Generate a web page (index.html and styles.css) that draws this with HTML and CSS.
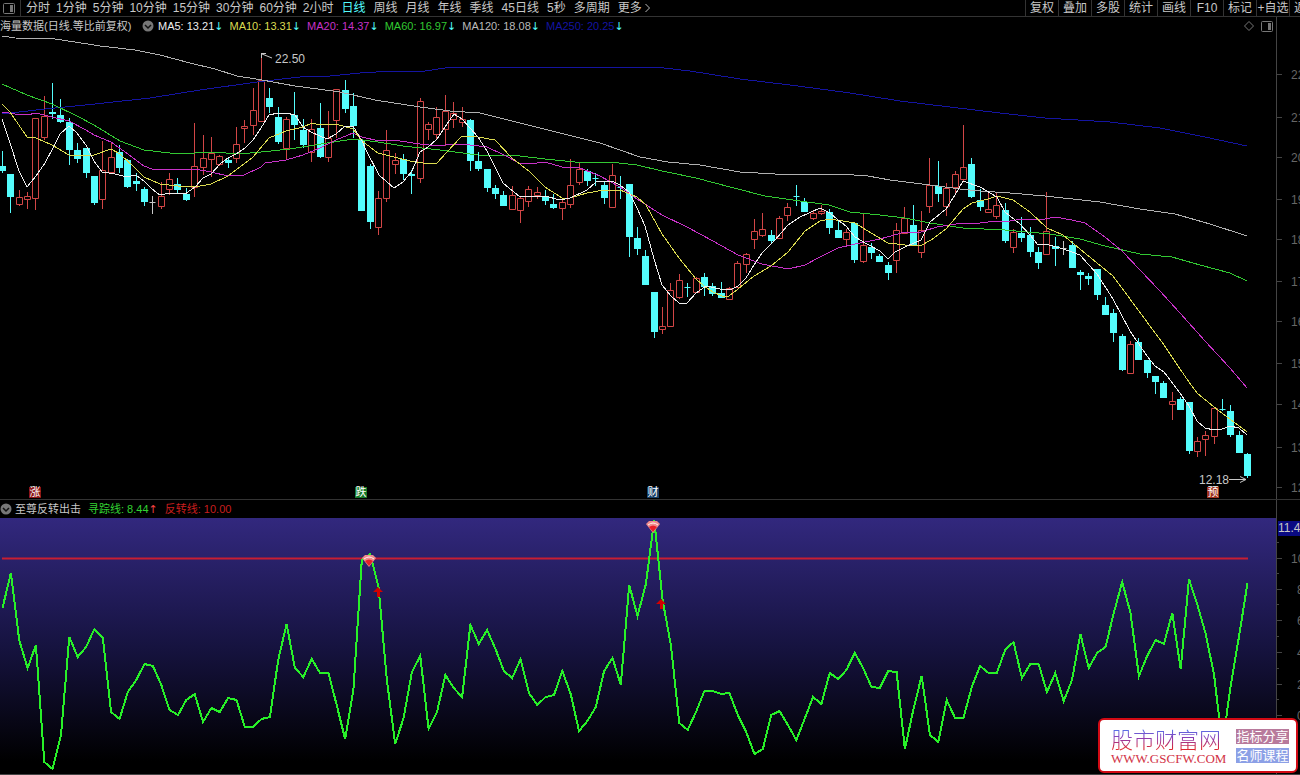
FILE: index.html
```html
<!DOCTYPE html>
<html lang="zh-CN">
<head>
  <meta charset="UTF-8" />
  <meta name="viewport" content="width=device-width, initial-scale=1.0" />
  <title>海量数据 日线</title>
  <link rel="stylesheet" href="styles.css">
</head>
<body>
  <header class="toolbar">
    <button class="panel-btn" aria-label="侧栏">
      <svg width="12" height="11" viewBox="0 0 12 11"><rect x="0.5" y="0.5" width="11" height="10" rx="1" fill="none" stroke="#777"/><rect x="7" y="2" width="3" height="7" fill="#777"/></svg>
    </button>
    <nav class="periods">
      <button>分时</button>
      <button>1分钟</button>
      <button>5分钟</button>
      <button>10分钟</button>
      <button>15分钟</button>
      <button>30分钟</button>
      <button>60分钟</button>
      <button>2小时</button>
    </nav>
    <nav class="periods long">
      <button class="active">日线</button>
      <button>周线</button>
      <button>月线</button>
      <button>年线</button>
      <button>季线</button>
      <button>45日线</button>
      <button>5秒</button>
      <button>多周期</button>
      <button>更多<svg width="7" height="10" viewBox="0 0 7 10"><path d="M1.5 1 L5.5 5 L1.5 9" fill="none" stroke="#bbb"/></svg></button>
    </nav>
    <div class="tools">
      <button>复权</button>
      <button>叠加</button>
      <button>多股</button>
      <button>统计</button>
      <button>画线</button>
      <button>F10</button>
      <button>标记</button>
      <button>+自选</button>
      <button>返回</button>
    </div>
  </header>

  <main>
    <section class="pane">
      <div class="legend">
        <span class="stock">海量数据(日线.等比前复权)</span>
        <svg class="fold" width="12" height="12" viewBox="0 0 12 12"><circle cx="6" cy="6" r="5.5" fill="#777"/><path d="M3 5 L6 8 L9 5" fill="none" stroke="#111" stroke-width="1.5"/></svg>
        <span class="ma ma5">MA5: 13.21</span>
        <span class="ma ma10">MA10: 13.31</span>
        <span class="ma ma20">MA20: 14.37</span>
        <span class="ma ma60">MA60: 16.97</span>
        <span class="ma ma120">MA120: 18.08</span>
        <span class="ma ma250">MA250: 20.25</span>
        <span class="legend-icons">
          <svg width="10" height="10" viewBox="0 0 10 10"><path d="M5 0.5 L9.5 5 L5 9.5 L0.5 5 Z" fill="none" stroke="#777"/></svg>
          <svg width="12" height="11" viewBox="0 0 12 11"><rect x="0.5" y="0.5" width="11" height="10" rx="1" fill="none" stroke="#777"/><rect x="7" y="2" width="3" height="7" fill="#777"/></svg>
        </span>
        <span class="axis-gap"></span>
      </div>
      <svg id="kline" class="chart" viewBox="0 35 1300 464"></svg>
    </section>

    <section class="pane sub">
      <div class="legend">
        <svg class="fold" width="12" height="12" viewBox="0 0 12 12"><circle cx="6" cy="6" r="5.5" fill="#777"/><path d="M3 5 L6 8 L9 5" fill="none" stroke="#111" stroke-width="1.5"/></svg>
        <span class="name">至尊反转出击</span>
        <span class="track">寻踪线: 8.44</span>
        <span class="turn">反转线: 10.00</span>
        <span class="axis-gap"></span>
      </div>
      <svg id="indicator" class="chart" viewBox="0 518 1300 257"></svg>
    </section>
  </main>

  <aside class="brand">
    <div class="brand-main">
      <strong>股市财富网</strong>
      <span>WWW.GSCFW.COM</span>
    </div>
    <div class="brand-tags">
      <span class="tag-pink">指标分享</span>
      <span class="tag-blue">名师课程</span>
    </div>
  </aside>

  <script src="chart.js"></script>
</body>
</html>
```
FILE: styles.css
```css
* { box-sizing: border-box; }
body {
  margin: 0;
  background-color: #000;
  color: #c8c8c8;
  font-family: "Liberation Sans", "Noto Sans CJK SC", sans-serif;
  font-size: 12px;
  overflow: hidden;
}
button {
  border: none;
  background: none;
  padding: 0;
  color: inherit;
  font: inherit;
  white-space: nowrap;
  cursor: pointer;
}
button:hover { color: #fff; }

/* top toolbar */
.toolbar {
  display: flex;
  height: 17px;
  line-height: 14px;
  border-bottom: 1px solid #333;
}
.panel-btn {
  width: 21px;
  border-right: 1px solid #333;
  display: flex;
  padding-left: 3px;
  align-items: center;
  flex-shrink: 0;
}
.periods {
  display: flex;
  gap: 6px;
  padding-left: 5px;
}
.periods.long { gap: 8px; padding-left: 8px; }
.periods .active { color: #54fcfc; }
.periods svg { margin-left: 2px; vertical-align: -1px; }
.tools {
  display: flex;
  width: 275px;
  margin-left: auto;
  overflow: hidden;
}
.tools button {
  width: 33px;
  flex-shrink: 0;
  border-left: 1px solid #333;
}

/* legend rows */
.legend {
  display: flex;
  align-items: center;
  height: 18px;
  font-size: 11px;
  line-height: 18px;
  white-space: nowrap;
}
.stock { width: 142px; }
.fold { flex-shrink: 0; }
.ma { margin-left: 4px; margin-right: 2px; }
.ma::after, .track::after {
  content: "↓";
  font-family: "DejaVu Sans", sans-serif;
  color: #54fcfc;
}
.ma5 { color: #eee; }
.ma10 { color: #dcdc50; }
.ma20 { color: #c832c8; }
.ma60 { color: #32c832; }
.ma120 { color: #bbb; }
.ma250 { color: #1414a0; }
.legend-icons {
  display: flex;
  align-items: center;
  gap: 7px;
  margin-left: auto;
  margin-right: 3px;
}
.axis-gap {
  width: 24px;
  height: 18px;
  border-left: 1px solid #444;
}
.chart { display: block; width: 100%; height: auto; }
.chart polyline { shape-rendering: crispEdges; }
.chart text { font-size: 12px; fill: #c8c8c8; }
.chart .axis { fill: #666; }
.chart .tag { font-size: 11px; fill: #fff; text-anchor: middle; }

/* indicator pane */
.sub { border-top: 1px solid #333; }
.name { margin-left: 3px; }
.track { color: #32d232; margin-left: 7px; }
.track::after { content: "↑"; color: #f04040; }
.turn { color: #c81e1e; margin-left: 7px; }
.sub .axis-gap { margin-left: auto; }

/* site badge over the corner */
.brand {
  position: fixed;
  right: 2px;
  bottom: 2px;
  display: flex;
  align-items: center;
  gap: 12px;
  width: 200px;
  height: 55px;
  padding-left: 11px;
  border: 2px solid #d20a14;
  border-radius: 6px;
  background-color: #fff;
}
.brand-main { display: flex; flex-direction: column; width: 113px; }
.brand-main strong {
  font-family: "Noto Sans CJK SC", sans-serif;
  font-size: 22px;
  font-weight: 300;
  line-height: 26px;
  background-image: linear-gradient(#5a6ee6 20%, #8c3cb4 50%, #dc2832 90%);
  background-clip: text;
  -webkit-background-clip: text;
  color: transparent;
}
.brand-main span {
  font-family: "Liberation Serif", serif;
  font-size: 13px;
  line-height: 16px;
  color: #d23246;
}
.brand-tags { display: flex; flex-direction: column; gap: 4px; }
.brand-tags span {
  width: 53px;
  font-size: 13px;
  line-height: 15px;
  color: #fff;
  text-align: center;
}
.tag-pink { background-color: #b87a9c; }
.tag-blue { background-color: #8ca0e6; }
```
FILE: chart.js
```js
// x of the first bar and the step between bars
const X0 = 2.5;
const STEP = 1245 / 149;
const barX = i => X0 + i * STEP;

// each bar: kind (u up, d down, c flat cross, w white cross), high, body top, body bottom, low
const bars = `d151,166,171,173 d174,174,197,213 u190,197,204,206 u192,196,199,209 u118,118,198,210
u96,116,137,140 d83,112,114,119 d99,115,122,123 d118,122,150,165 d143,150,159,163
d148,148,173,178 d176,176,203,205 u141,170,199,209 u142,157,172,174 d145,152,168,173
d159,160,187,188 d173,181,184,191 d187,189,202,206 w196,202,202,214 u182,196,206,209
u173,179,189,195 d178,184,190,193 d188,194,200,201 u123,166,187,197 u135,158,167,175
u137,153,159,177 u155,156,164,166 d158,160,163,168 u127,144,158,163 u120,126,128,143
u88,110,125,135 u54,80,121,122 d88,98,107,113 d107,117,142,144 u117,119,148,159
d92,115,125,140 d119,130,145,148 u119,129,152,162 d103,128,157,158 u111,138,157,162
u89,89,120,138 d80,90,109,113 d93,106,126,138 d140,140,211,211 d164,166,222,229
u191,198,227,235 u130,150,198,202 u153,160,164,174 d154,159,174,180 d170,174,176,194
u98,101,178,183 u122,124,129,140 u107,117,134,140 u95,111,129,146 u102,113,119,128
u107,119,122,127 d119,120,161,171 d152,161,169,171 d169,169,188,192 d185,188,194,199
d191,195,206,206 u186,195,209,209 u196,198,210,223 u186,189,201,207 u187,192,195,199
d190,196,201,205 d194,204,208,209 u200,202,208,220 u159,185,204,208 u162,169,182,185
d169,171,181,186 c173,178,178,186 d182,185,198,204 u164,175,207,208 c176,187,187,199
d184,184,237,257 d227,238,249,255 d250,256,285,285 d292,292,332,338 u307,326,329,334
u283,290,326,327 u274,280,297,299 c283,287,287,297 u277,278,292,293 d273,277,287,296
d283,286,294,296 d282,293,298,298 u287,288,299,300 u261,263,287,288 u253,254,264,273
u219,231,239,249 u213,229,235,237 d230,235,241,243 u216,218,238,238 u203,207,215,221
c185,196,196,206 d198,202,212,212 u210,213,218,220 u205,211,213,215 d209,212,228,234
d221,230,238,238 u229,232,239,246 d222,223,260,263 u213,245,261,263 d243,247,253,259
d254,256,262,262 d262,265,273,280 u223,230,260,273 u207,218,233,234 d205,225,246,246
u211,230,252,258 u158,185,206,213 d161,186,194,202 u183,188,206,216 u171,174,187,194
u125,167,179,182 d158,164,197,198 d189,200,207,211 u193,209,212,212 u193,205,216,219
d203,210,241,243 u229,232,247,253 d217,233,238,242 d227,235,252,257 d247,252,263,269
u192,231,254,254 d237,246,249,266 w241,248,248,255 d241,245,268,268 d270,272,275,290
d273,276,279,285 d269,269,295,300 d297,305,315,315 d309,313,333,342 d334,336,370,371
u341,344,373,373 d338,342,360,360 d360,360,373,378 d376,376,382,394 d381,383,398,398
u392,401,404,420 d397,399,410,410 d402,402,451,454 u437,441,451,457 u431,435,439,456
u407,408,436,444 c399,409,409,411 d405,411,435,437 d431,435,453,453 d453,454,476,478`.split(/\s+/);

const averages = [
  ['#1414a0', '2,114 45,109 95,104 150,98 200,90 250,83 265,81 300,77 330,76 360,73 392,71 425,71 452,67 655,67 690,71 740,79 790,85 850,93 900,101 950,107 1000,113 1045,118 1110,122 1160,128 1205,137 1247,146'],
  ['#b0b0b0', '2,36 15,38 55,39 75,42 100,46 135,50 160,55 190,63 215,69 237,76 262,80 295,86 340,92 375,100 420,107 450,111 480,113 520,123 560,133 600,143 640,157 668,162 700,165 740,172 775,174 840,174 868,176 890,180 930,185 960,189 980,191 1010,193 1045,196 1100,202 1140,209 1175,214 1210,224 1247,236'],
  ['#32c832', '2,84 27,95 52,104 77,116 94,125 120,141 144,150 170,153 195,153 211,152 240,154 261,152 290,149 315,145 340,141 355,139 378,142 403,146 440,150 478,155 520,156 545,159 575,162 610,162 637,165 662,171 696,178 730,187 765,196 800,201 829,205 850,212 880,215 905,218 930,223 963,228 1005,230 1050,234 1080,239 1105,246 1140,254 1172,257 1200,265 1230,273 1247,281'],
  ['#c832c8', '2,112 15,114 27,115 36,113 52,117 69,121 86,130 94,135 111,142 128,154 144,166 152,169 169,170 195,169 211,172 228,176 244,175 261,167 265,163 286,160 303,155 320,148 336,140 353,133 362,137 379,141 387,140 400,141 420,144 437,146 454,144 470,145 487,147 504,155 521,164 537,163 545,162 562,167 580,168 600,176 620,187 637,199 662,215 687,227 713,241 738,255 762,264 788,269 805,265 820,257 838,248 855,244 880,239 905,232 921,232 937,227 963,223 980,223 997,221 1010,221 1022,219 1040,220 1055,217 1072,220 1085,223 1105,237 1122,251 1140,270 1160,291 1180,313 1205,341 1230,368 1247,388'],
  ['#dcdc50', '2,104 10,112 27,137 36,138 52,145 69,155 94,155 111,149 120,154 135,168 144,177 160,184 178,186 195,187 211,184 228,176 244,164 253,157 269,138 286,131 303,127 312,123 320,125 336,124 353,129 362,141 378,153 394,157 410,161 429,164 437,163 446,153 462,136 478,137 495,140 512,158 530,172 545,187 562,198 570,198 587,193 604,190 620,190 637,197 646,205 662,234 679,258 696,279 704,286 713,292 722,296 729,296 738,289 754,276 771,266 788,252 805,231 820,221 830,219 855,223 871,233 888,243 905,245 920,246 931,240 946,229 963,209 972,203 988,199 997,196 1013,200 1030,212 1047,228 1063,235 1080,249 1097,263 1113,276 1130,299 1147,322 1164,345 1180,369 1189,382 1197,393 1214,407 1230,419 1247,432'],
  ['#eeeeee', '2,119 10,143 19,171 27,187 36,176 45,163 53,148 60,134 69,126 77,133 86,145 94,161 102,172 115,174 127,177 136,175 145,182 152,189 160,195 170,193 185,194 195,187 203,178 211,174 220,164 228,158 236,154 245,148 253,140 261,128 269,115 278,113 286,113 295,115 303,127 311,132 320,136 327,139 336,134 345,126 353,126 362,141 366,150 379,175 394,188 403,182 412,171 420,152 428,147 437,139 445,127 454,114 462,119 470,128 478,137 487,151 503,183 520,197 545,196 560,200 570,198 587,190 596,182 612,181 620,185 629,192 637,208 645,226 654,259 662,285 671,296 679,303 687,303 696,293 706,286 720,289 730,290 738,286 746,278 754,265 762,253 775,240 788,225 800,217 820,208 830,213 838,220 846,226 855,237 867,244 880,251 888,259 895,252 905,247 921,240 930,222 946,209 955,195 963,181 980,187 997,197 1005,212 1020,224 1030,235 1038,245 1046,244 1063,249 1072,252 1080,255 1097,274 1113,299 1130,331 1147,356 1155,366 1164,372 1180,393 1189,406 1197,421 1205,428 1214,430 1222,429 1230,426 1239,428 1247,435']
];

// indicator line, one height per bar
const track = [608,573,640,668,645,762,769,735,637,657,647,629,638,712,719,692,680,664,666,685,
  710,715,700,694,722,708,712,698,700,727,727,719,717,660,624,668,677,659,673,673,
  705,739,690,560,554,587,680,744,718,672,656,729,712,675,688,697,625,644,630,649,
  671,678,659,693,705,697,695,671,694,731,721,707,671,658,685,585,616,584,520,600,
  646,723,730,712,691,691,694,693,715,732,754,749,715,711,725,740,719,697,704,673,
  679,670,653,668,687,688,671,672,749,710,676,735,742,700,718,718,687,666,673,673,
  650,642,678,664,664,692,673,701,680,634,668,653,647,613,582,613,676,656,640,644,
  613,669,579,605,634,675,745,685,636,583];

function drawBar(bar, i) {
  const kind = bar[0];
  const [high, top, bottom, low] = bar.slice(1).split(',').map(Number);
  const x = Math.floor(barX(i)) + 0.5;
  if (kind === 'u') {
    return `<path d="M${x} ${high}V${top}M${x} ${bottom}V${low}M${x - 3} ${top + 0.5}H${x + 3}V${bottom + 0.5}H${x - 3}Z" fill="none" stroke="#d24646"/>`;
  }
  const color = kind === 'w' ? '#c8c8c8' : '#54fcfc';
  if (kind !== 'd') {
    return `<path d="M${x} ${high}V${low}M${x - 3} ${top + 0.5}H${x + 3}" stroke="${color}"/>`;
  }
  return `<path d="M${x} ${high}V${low}" stroke="${color}"/><rect x="${x - 3.5}" y="${top}" width="7" height="${bottom - top}" fill="${color}"/>`;
}

function drawTag(x, text, color) {
  return `<rect x="${x - 6}" y="487" width="12" height="11" fill="${color}"/><text class="tag" x="${x}" y="496">${text}</text>`;
}

function drawKline() {
  let out = '';
  bars.forEach((bar, i) => { out += drawBar(bar, i); });
  averages.forEach(([color, points]) => {
    out += `<polyline points="${points}" fill="none" stroke="${color}"/>`;
  });
  // high and low of the range
  out += '<path d="M261 53.5H266M261.5 53V58M262 54L272 58" fill="none" stroke="#c8c8c8"/><text x="275" y="63">22.50</text>';
  out += '<text x="1199" y="484">12.18</text><path d="M1229 479.5H1246M1240 476.5L1246 479.5L1240 482.5" fill="none" stroke="#c8c8c8"/>';
  out += drawTag(35, '涨', '#8c1414') + drawTag(361, '跌', '#147828') + drawTag(653, '财', '#143c64') + drawTag(1213, '预', '#a0321e');
  // price axis
  out += '<path d="M1276.5 35V499" stroke="#444"/>';
  [74, 117, 157, 199, 239, 281, 321, 363, 404, 447, 487].forEach((y, i) => {
    out += `<path d="M1277 ${y + 0.5}H1282" stroke="#444"/><text class="axis" x="1291" y="${y + 5}">${22 - i}.00</text>`;
  });
  document.getElementById('kline').innerHTML = out;
}

function drawGem(x, y) {
  return `<g transform="translate(${x} ${y})"><path d="M-7 -2L-4 -5H4L7 -2L0 7Z" fill="#f08c8c"/><path d="M-5 -1Q0 -5 5 -1" fill="none" stroke="#fff0f0"/><path d="M-4 1Q0 -2 4 1L0 6Z" fill="#e61e28"/></g>`;
}

function drawArrow(x, y) {
  return `<path d="M${x} ${y}L${x + 5} ${y + 5}H${x + 2}V${y + 10}H${x - 1}V${y + 5}H${x - 5}Z" fill="#d20000"/>`;
}

function drawIndicator() {
  const points = track.map((y, i) => barX(i).toFixed(1) + ',' + y).join(' ');
  let out = '<defs><linearGradient id="sky" x1="0" y1="0" x2="0" y2="1"><stop offset="0" stop-color="#32287e"/><stop offset="0.5" stop-color="#161340"/><stop offset="0.95" stop-color="#000"/></linearGradient></defs>';
  out += '<rect x="0" y="518" width="1276" height="256" fill="url(#sky)"/>';
  out += '<path d="M2 558.5H1248" stroke="#c81e32" stroke-width="2"/>';
  out += `<polyline points="${points}" fill="none" stroke="#28f028" stroke-width="2"/>`;
  out += drawGem(369, 560) + drawGem(653, 526) + drawArrow(378, 587) + drawArrow(661, 599);
  // value axis
  out += '<path d="M1276.5 518V775M0 774.5H1300" stroke="#444"/>';
  [559, 590, 621, 653, 685, 716].forEach((y, i) => {
    const x = i === 0 ? 1291 : 1297;
    out += `<path d="M1277 ${y - 0.5}H1282M1277 ${y - 16.5}H1279" stroke="#444"/><text class="axis" x="${x}" y="${y + 4}">${(10 - i * 2).toFixed(2)}</text>`;
  });
  out += '<rect x="1278" y="521" width="22" height="15" fill="#0a0a82"/><text x="1278" y="532">11.44</text>';
  document.getElementById('indicator').innerHTML = out;
}

drawKline();
drawIndicator();
```
